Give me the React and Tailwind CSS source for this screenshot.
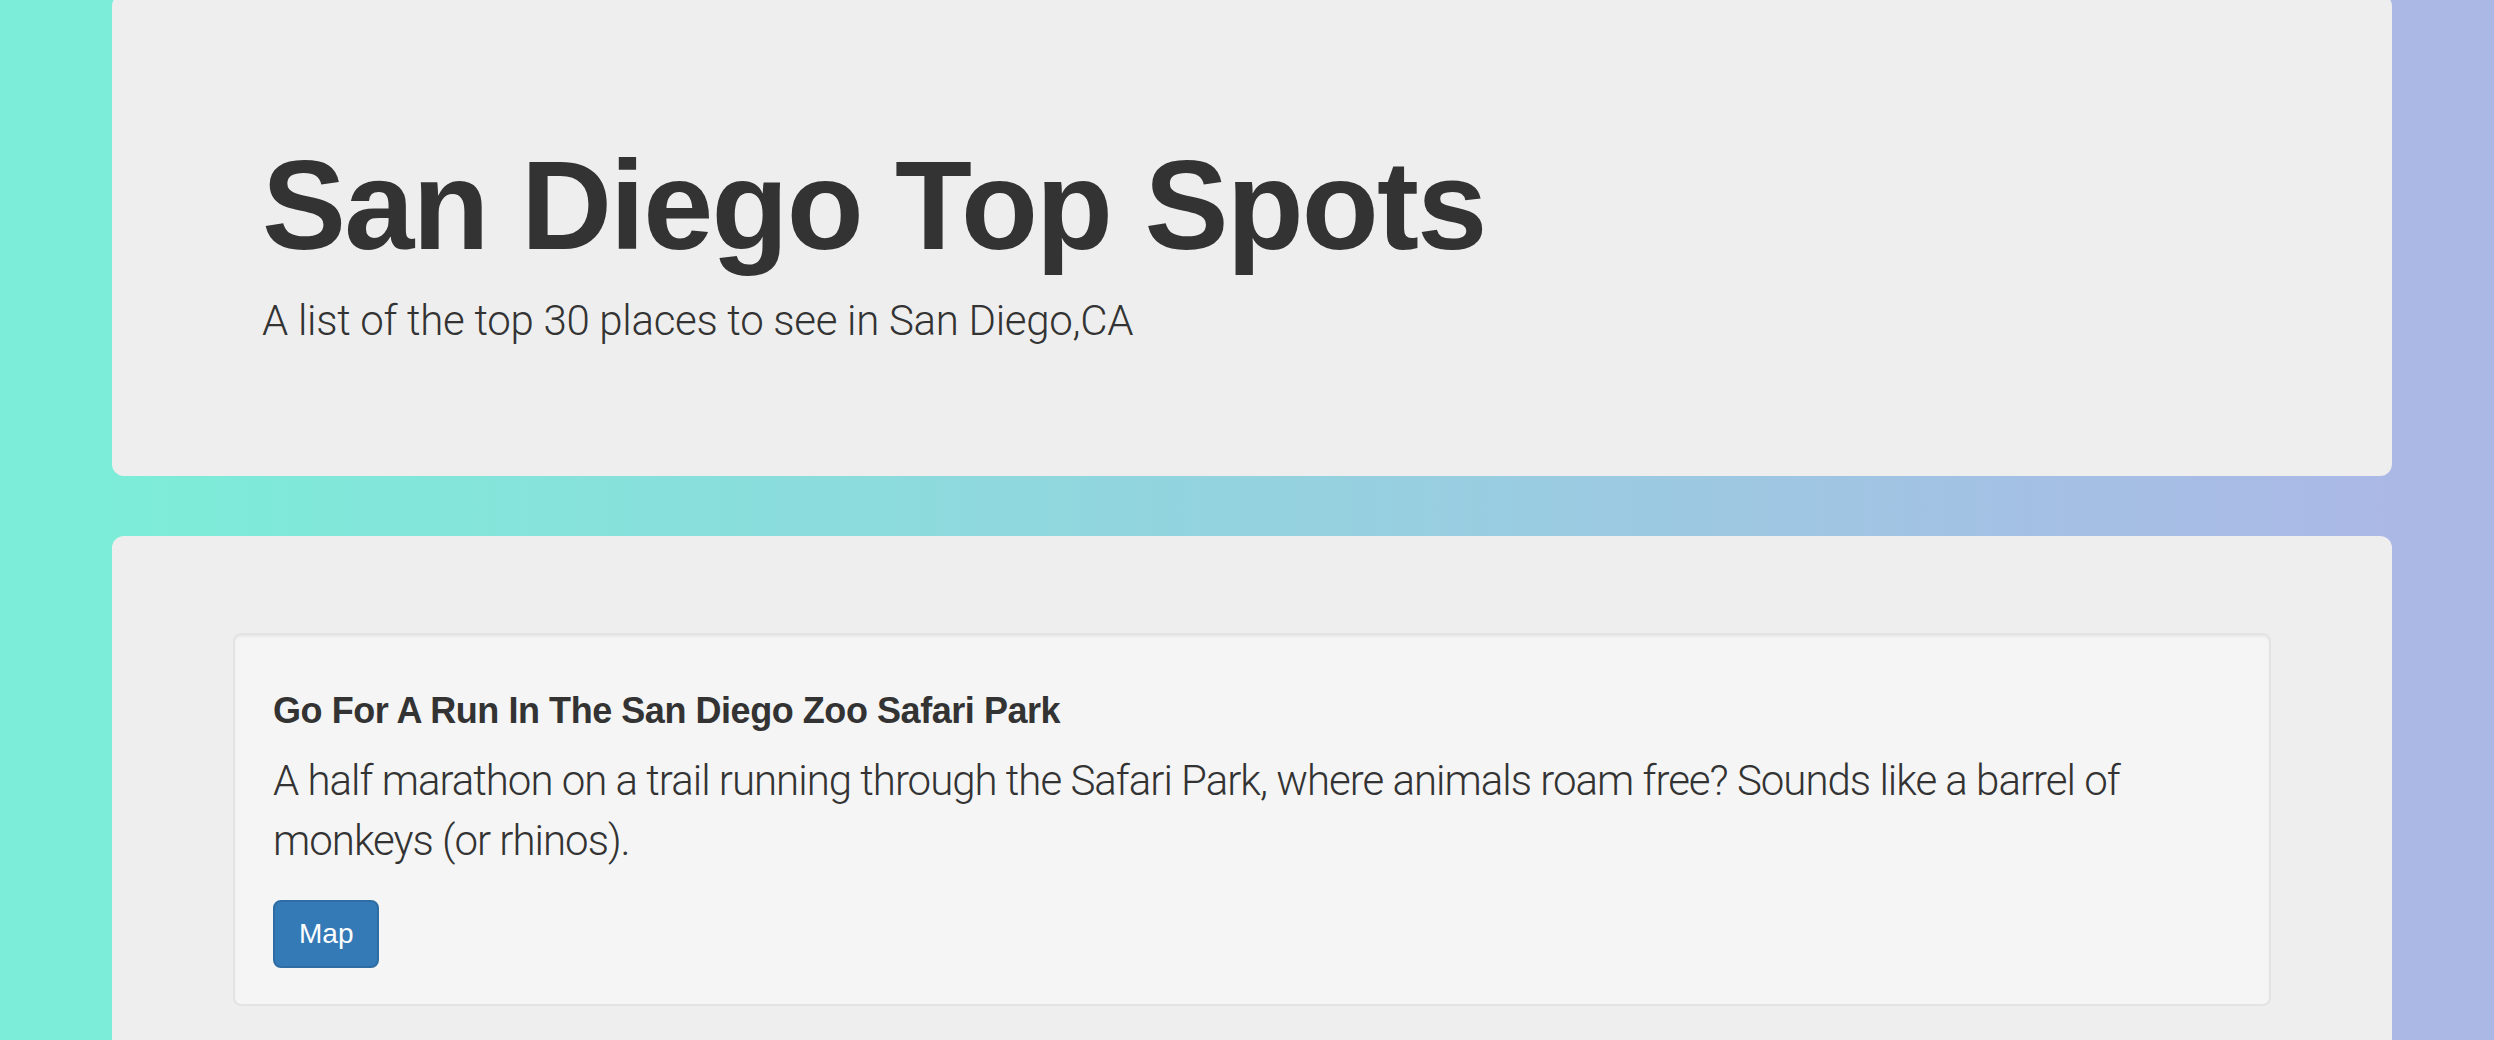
import React from 'react';

const spots = [
  {
    title: 'Go For A Run In The San Diego Zoo Safari Park',
    text: 'A half marathon on a trail running through the Safari Park, where animals roam free? Sounds like a barrel of monkeys (or rhinos).',
  },
];

const sans = "font-['Liberation_Sans',Arial,sans-serif]";
const light = "font-['Roboto','Liberation_Sans',sans-serif] font-light";

export default function App() {
  return (
    <div className="min-h-screen h-[1040px] overflow-hidden bg-[linear-gradient(to_right,#7cedd8_4%,#abb8e6_96%)] text-[#333333]">
      {/* header */}
      <div className="ml-[112px] mt-[-6px] w-[2280px] h-[482px] rounded-[12px] bg-[#eeeeee] pl-[150px] pt-[142px]">
        <h1 className={`${sans} font-bold text-[126px] leading-[140px] tracking-[-1.8px]`}>San Diego Top Spots</h1>
        <p className={`${light} text-[42px] leading-[60px] mt-[15px] tracking-[-0.3px]`}>A list of the top 30 places to see in San Diego,CA</p>
      </div>

      {/* list */}
      <div className="ml-[112px] mt-[60px] w-[2280px] h-[600px] rounded-t-[12px] bg-[#eeeeee] px-[121px] pt-[97px]">
        {spots.map(s => (
          <div key={s.title} className="rounded-[8px] border-2 border-[#e3e3e3] bg-[#f5f5f5] shadow-[inset_0_2px_2px_rgba(0,0,0,0.05)] px-[38px] pt-[56px] pb-[36px]">
            <h4 className={`${sans} font-bold text-[36px] leading-[40px] tracking-[-0.45px]`}>{s.title}</h4>
            <p className={`${light} text-[42px] leading-[60px] mt-[20px] tracking-[-1px]`}>{s.text}</p>
            <button className={`${sans} mt-[29px] h-[68px] px-[24px] rounded-[8px] border-2 border-[#2e6da4] bg-[#337ab7] text-white text-[28px] leading-[40px]`}>
              Map
            </button>
          </div>
        ))}
      </div>
    </div>
  );
}
